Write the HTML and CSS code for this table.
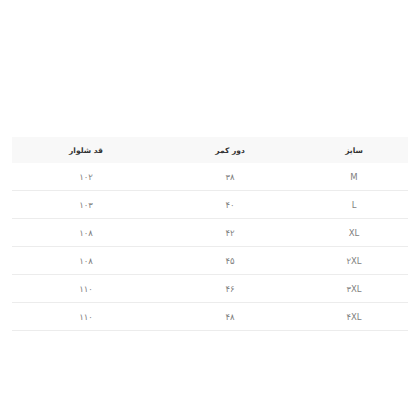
FILE: index.html
```html
<!DOCTYPE html>
<html lang="fa" dir="rtl">
<head>
<meta charset="utf-8">
<link rel="stylesheet" href="styles.css">
</head>
<body>
<div class="wrap">
  <table class="sizes">
    <thead>
      <tr><th class="c1">سایز</th><th class="c2">دور کمر</th><th class="c3">قد شلوار</th></tr>
    </thead>
    <tbody>
      <tr><td>M</td><td>۳۸</td><td>۱۰۲</td></tr>
      <tr><td>L</td><td>۴۰</td><td>۱۰۳</td></tr>
      <tr><td>XL</td><td>۴۲</td><td>۱۰۸</td></tr>
      <tr><td>۲XL</td><td>۴۵</td><td>۱۰۸</td></tr>
      <tr><td>۳XL</td><td>۴۶</td><td>۱۱۰</td></tr>
      <tr><td>۴XL</td><td>۴۸</td><td>۱۱۰</td></tr>
    </tbody>
  </table>
</div>
</body>
</html>
```

FILE: styles.css
```css
html, body {
  margin: 0;
  padding: 0;
  background: #fff;
}
.wrap {
  padding: 137px 12px 0 12px;
}
.sizes {
  width: 396px;
  border-collapse: collapse;
  table-layout: fixed;
  font-family: "DejaVu Sans", sans-serif;
}
.sizes .c1 { width: 108px; }
.sizes .c2 { width: 140px; }
.sizes .c3 { width: 148px; }
.sizes th {
  background: #f8f8f8;
  height: 26px;
  padding: 0;
  font-size: 7.5px;
  font-weight: bold;
  color: #333;
  text-align: center;
  vertical-align: middle;
}
.sizes td {
  height: 27px;
  padding: 0;
  font-size: 8.5px;
  color: #808080;
  text-align: center;
  vertical-align: middle;
  border-bottom: 1px solid #ececec;
}
```
